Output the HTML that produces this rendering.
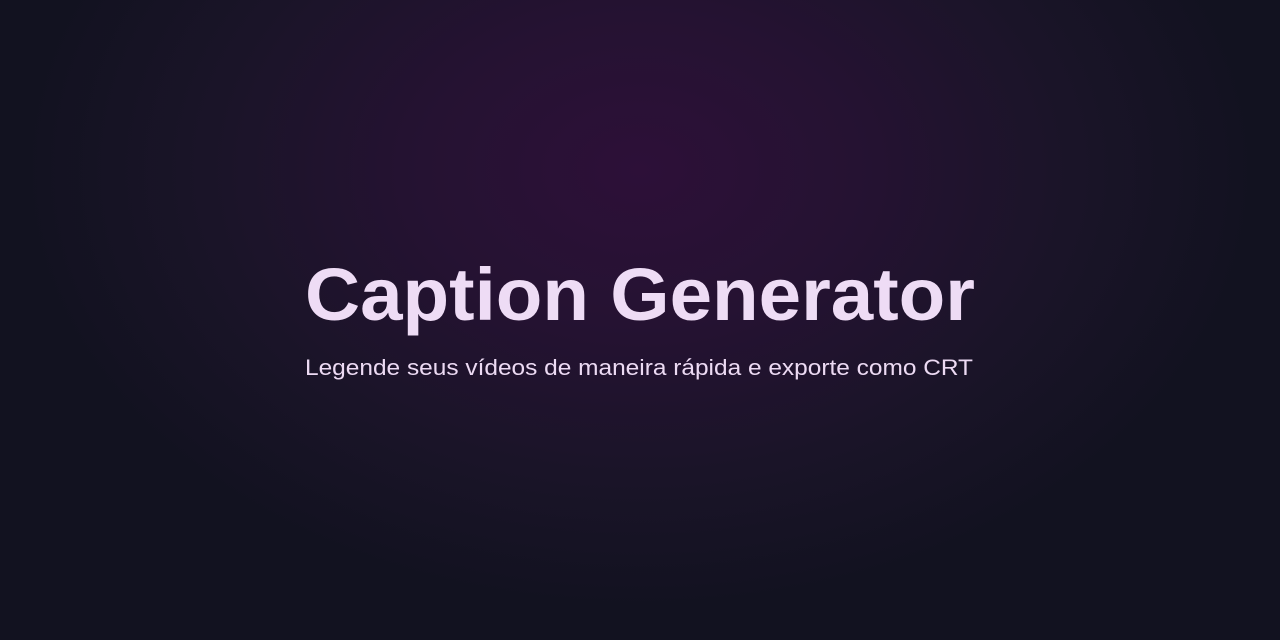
<!DOCTYPE html>
<html><head><meta charset="utf-8"><style>
html,body{margin:0;padding:0;width:1280px;height:640px;overflow:hidden}
body{background:radial-gradient(ellipse 620px 440px at 640px 170px,#2d1038 0%,#251232 35%,#1a1428 70%,#121220 100%);}
svg{position:absolute;left:0;top:0}
</style></head><body>
<svg width="1280" height="640">
<text x="305" y="320" font-family="Liberation Sans, sans-serif" font-weight="bold" font-size="74" fill="#eedcf5" textLength="670" lengthAdjust="spacingAndGlyphs">Caption Generator</text>
<text x="305" y="375" font-family="Liberation Sans, sans-serif" font-size="22" fill="#ecdaf3" textLength="668" lengthAdjust="spacingAndGlyphs">Legende seus vídeos de maneira rápida e exporte como CRT</text>
</svg>
</body></html>
